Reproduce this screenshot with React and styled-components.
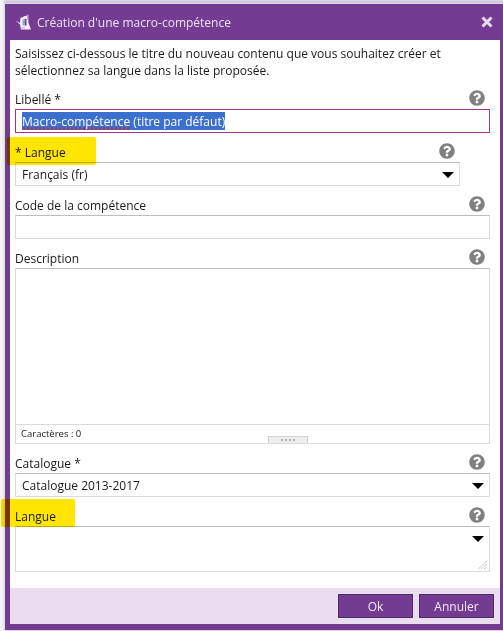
import React from 'react';
import styled, { createGlobalStyle } from 'styled-components';
import { FaQuestionCircle } from 'react-icons/fa';

const Global = createGlobalStyle`
  html, body { margin: 0; padding: 0; background: #fff; }
  body { font-family: "Open Sans", "Noto Sans", sans-serif; overflow: hidden; }
  * { box-sizing: border-box; }
`;

const Page = styled.div`
  position: relative;
  width: 503px;
  height: 631px;
  padding: 1px 0 1px 0;
  background: linear-gradient(90deg, #f6f6f6 0, #f0f0f0 3px, #d8d8d8 5px);
  overflow: hidden;
`;
const BackEdge = styled.div`
  height: 2px;
  margin: 0 0 1px 5px;
  background: #d6c8e2;
`;
const Dialog = styled.div`
  margin-left: 5px;
  width: 498px;
  height: 626px;
  border: solid #743b92;
  border-width: 0 3px 6px 5px;
  background: #fff;
  display: flex;
  flex-direction: column;
  color: #1a1a1a;
`;
const TitleBar = styled.div`
  height: 36px;
  flex: none;
  background: #743b92;
  display: flex;
  align-items: center;
  color: #ece4f1;
  font-size: 12px;
  gap: 5px;
  padding: 0 7px 0 5px;
`;
const Title = styled.div`
  flex: 1;
`;
const Body = styled.div`
  flex: 1;
  padding: 5px 10px 0 5px;
  display: flex;
  flex-direction: column;
  gap: 9px;
`;
const Intro = styled.p`
  margin: 0;
  height: 35px;
  font-size: 12px;
  line-height: 17px;
`;
const Field = styled.div`
  width: ${p => p.$width || 475}px;
`;
const Header = styled.div`
  height: 20px;
  display: flex;
  align-items: center;
  justify-content: space-between;
  font-size: 12px;
  padding-right: 5px;
  color: #1a1a1a;
  svg { color: #808080; display: block; margin-bottom: 2px; }
`;
const Control = styled.div`
  position: relative;
  height: ${p => p.$h || 24}px;
  border: 1px solid #dcdcdc;
  border-top-color: #bdbdbd;
  font-size: 12px;
  line-height: 23px;
  padding: 0 6px;
  color: #1a1a1a;
`;
const TitleInput = styled(Control)`
  border: 1px solid #a2338f;
  line-height: 21px;
`;
const Selected = styled.span`
  background: #3b70cf;
  color: #fff;
  display: inline-block;
  height: 18px;
  line-height: 19px;
  vertical-align: top;
  margin-top: 2px;
`;
const Misspelt = styled.span`
  display: inline-block;
  height: 18px;
  background: radial-gradient(circle at 50% 50%, #c9252f 1px, transparent 1.4px) 0 100% / 4px 3px repeat-x;
`;
const Caret = styled.svg`
  position: absolute;
  right: 5px;
  top: 9px;
  width: 12px;
  height: 6px;
`;
const Editor = styled(Control)`
  height: 176px;
  display: flex;
  flex-direction: column;
  padding: 0;
`;
const EditorArea = styled.div`
  flex: 1;
  border-bottom: 1px solid #dcdcdc;
`;
const Counter = styled.div`
  height: 18px;
  position: relative;
  font-size: 9.5px;
  line-height: 17px;
  padding-left: 5px;
`;
const Splitter = styled.div`
  position: absolute;
  left: 252px;
  bottom: 0;
  width: 40px;
  height: 7px;
  background: #ededed;
  border: 1px solid #d4d4d4;
  border-bottom: none;
  display: flex;
  justify-content: center;
  align-items: center;
  gap: 2px;
`;
const Dot = styled.i`
  width: 2px;
  height: 2px;
  background: #b4b4b4;
`;
const Grip = styled.svg`
  position: absolute;
  right: 1px;
  bottom: 1px;
  width: 10px;
  height: 10px;
`;
const Footer = styled.div`
  height: 36px;
  flex: none;
  background: #eaddef;
  display: flex;
  align-items: center;
  justify-content: flex-end;
  gap: 6px;
  padding-right: 6px;
`;
const Button = styled.button`
  width: 75px;
  height: 24px;
  background: #743b92;
  border: 1px solid #4f2a68;
  color: #f3edf6;
  font: 12px "Open Sans", sans-serif;
  padding: 0;
`;
const Close = styled.svg`
  width: 12px;
  height: 12px;
`;
const Highlight = styled.div`
  position: absolute;
  left: ${p => p.$l}px;
  top: ${p => p.$t}px;
  width: ${p => p.$w}px;
  height: ${p => p.$h}px;
  background: #ffe600;
  mix-blend-mode: multiply;
  border-radius: 2px;
`;

const Help = () => <FaQuestionCircle size={16} />;
const Arrow = () => (
  <Caret viewBox="0 0 12 6"><polygon points="0,0 12,0 6,6" fill="#000" /></Caret>
);
const Logo = () => (
  <svg width="17" height="17" viewBox="0 0 17 17" style={{ flex: 'none' }}>
    <path d="M0.5 6.5L5 9 5.5 4 10 2 13 1.5 13.5 9 16 15.5H6L5 10.5z" fill="#f6f0fa" />
    <path d="M7.5 5.5h1.5v6H7.5z" fill="#5fb4e8" />
    <path d="M9.5 5h2v6.5h-2z" fill="#743b92" />
    <path d="M12 0.5h1.5v5H12z" fill="#e58bc6" />
    <path d="M6 13h4v1.5H6z" fill="#d9b6e8" />
  </svg>
);

export default function App() {
  return (
    <Page>
      <Global />
      <BackEdge />
      <Dialog>
        <TitleBar>
          <Logo />
          <Title>Création d'une macro-compétence</Title>
          <Close viewBox="0 0 12 12">
            <path d="M1.5 1.5l9 9M10.5 1.5l-9 9" stroke="#e6dcec" strokeWidth="3" />
          </Close>
        </TitleBar>
        <Body>
          <Intro>
            Saisissez ci-dessous le titre du nouveau contenu que vous souhaitez créer et
            <br />
            sélectionnez sa langue dans la liste proposée.
          </Intro>
          <Field>
            <Header>Libellé *<Help /></Header>
            <TitleInput>
              <Selected><Misspelt>Macro-compétence</Misspelt> (titre par défaut)</Selected>
            </TitleInput>
          </Field>
          <Field $width={445}>
            <Header>* Langue<Help /></Header>
            <Control>Français (fr)<Arrow /></Control>
          </Field>
          <Field>
            <Header>Code de la compétence<Help /></Header>
            <Control />
          </Field>
          <Field>
            <Header>Description<Help /></Header>
            <Editor>
              <EditorArea />
              <Counter>
                Caractères : 0
                <Splitter><Dot /><Dot /><Dot /><Dot /></Splitter>
              </Counter>
            </Editor>
          </Field>
          <Field>
            <Header>Catalogue *<Help /></Header>
            <Control>Catalogue 2013-2017<Arrow /></Control>
          </Field>
          <Field>
            <Header>Langue<Help /></Header>
            <Control $h={46}>
              <Arrow />
              <Grip viewBox="0 0 10 10">
                <path d="M0 9L9 1M3 9l6-5M6 9l3-2" stroke="#cfcfcf" strokeWidth="1" />
              </Grip>
            </Control>
          </Field>
        </Body>
        <Footer>
          <Button>Ok</Button>
          <Button>Annuler</Button>
        </Footer>
      </Dialog>
      <Highlight $l={7} $t={137} $w={89} $h={28} />
      <Highlight $l={1} $t={499} $w={74} $h={28} />
    </Page>
  );
}
